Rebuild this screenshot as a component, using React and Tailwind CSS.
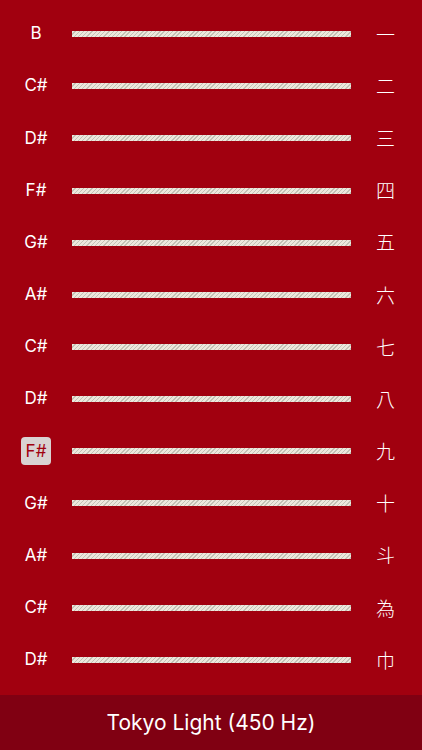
import React from "react";

const rows = [
  ["B", "一"],
  ["C#", "二"],
  ["D#", "三"],
  ["F#", "四"],
  ["G#", "五"],
  ["A#", "六"],
  ["C#", "七"],
  ["D#", "八"],
  ["F#", "九", true],
  ["G#", "十"],
  ["A#", "斗"],
  ["C#", "為"],
  ["D#", "巾"],
];

export default function App() {
  return (
    <div className="w-[422px] h-[750px] flex flex-col bg-[#a1000f] overflow-hidden" style={{ fontFamily: 'Inter, "Liberation Sans", "Noto Sans CJK JP", sans-serif' }}>
      <div className="h-[695px] flex flex-col pt-2 pb-[9px]">
        {rows.map(([note, kanji, active], i) => (
          <div key={i} className="flex-1 flex items-center">
            <div className="w-[72px] flex justify-center">
              {active ? (
                <div className="w-[30px] h-[28px] rounded-[4px] bg-[#d9d2d2] flex items-center justify-center text-[#a1000f] text-[17px]">
                  {note}
                </div>
              ) : (
                <span className="text-white text-[17px]">{note}</span>
              )}
            </div>
            <div className="w-[279px] h-[6px] bg-[repeating-linear-gradient(135deg,#ece8dd_0px,#ece8dd_2px,#c3c1b5_2px,#c3c1b5_3px)]"></div>
            <div className="flex-1 flex justify-center pr-[2px]">
              <span className="text-white text-[19px]" style={{ fontFamily: '"Noto Sans CJK JP", sans-serif', fontWeight: 300 }}>{kanji}</span>
            </div>
          </div>
        ))}
      </div>
      <div className="flex-1 bg-[#800012] flex items-center justify-center">
        <span className="text-white text-[21px]">Tokyo Light (450 Hz)</span>
      </div>
    </div>
  );
}
